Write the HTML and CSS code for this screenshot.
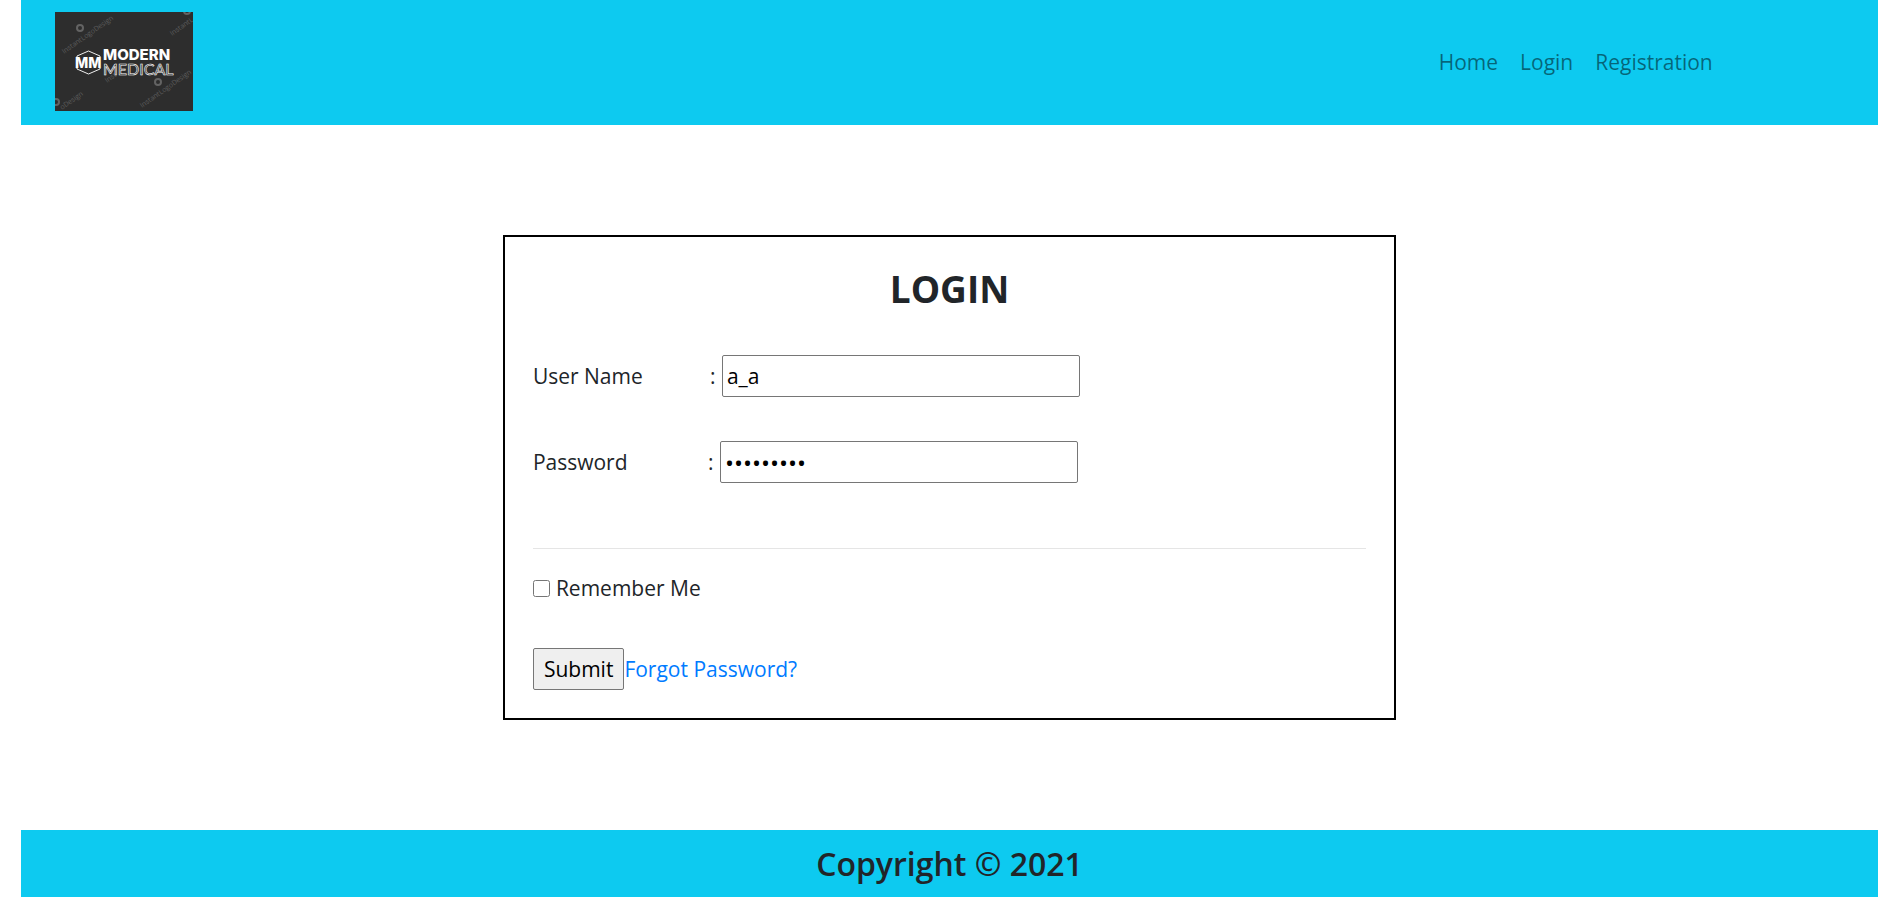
FILE: index.html
```html
<!DOCTYPE html>
<html lang="en">
<head>
<meta charset="utf-8">
<meta name="viewport" content="width=device-width, initial-scale=1">
<title>Login - Modern Medical</title>
<link rel="stylesheet" href="styles.css">
</head>
<body>
<div class="page">
  <header class="header">
    <a class="brand" href="#" aria-label="Modern Medical">
      <svg class="logo" viewBox="0 0 138 99" role="img" aria-hidden="true">
        <rect width="138" height="99" fill="#2d2d2d"/>
        <g class="mark">
          <text transform="translate(9 42) rotate(-35)">InstantLogoDesign</text>
          <text transform="translate(117 24) rotate(-35)">InstantL</text>
          <text transform="translate(52 71) rotate(-35)">Inst</text>
          <text transform="translate(87 96) rotate(-35)">InstantLogoDesign</text>
          <text transform="translate(7 98) rotate(-35)">oDesign</text>
        </g>
        <g fill="#2d2d2d" stroke="#636363" stroke-width="2">
          <circle cx="25" cy="16" r="3"/>
          <circle cx="103" cy="70" r="3"/>
          <circle cx="1" cy="90" r="3"/>
          <circle cx="132" cy="-1" r="3"/>
        </g>
        <path d="M22 45v-1l11.500-5L45 44v1M22 56v1l11.500 5L45 57v-1" fill="none" stroke="#eee" stroke-width="1"/>
        <text class="logo-mm" x="20" y="56">MM</text>
        <text class="logo-modern" x="48" y="48">MODERN</text>
        <text class="logo-medical" x="48" y="63">MEDICAL</text>
      </svg>
    </a>
    <nav class="nav">
      <a href="#">Home</a>
      <a href="#">Login</a>
      <a href="#">Registration</a>
    </nav>
  </header>
  <main class="main">
    <form class="card">
      <h1 class="title">LOGIN</h1>
      <div class="field">
        <label class="label" for="user">User Name</label>
        <span class="colon">:</span>
        <input class="input" id="user" type="text" value="a_a">
      </div>
      <div class="field field-password">
        <label class="label" for="password">Password</label>
        <span class="colon">:</span>
        <input class="input input-password" id="password" type="password" value="password1">
      </div>
      <hr class="rule">
      <div class="remember">
        <input class="check" id="remember" type="checkbox">
        <label for="remember">Remember Me</label>
      </div>
      <div class="actions">
        <button class="submit" type="button">Submit</button>
        <a class="forgot" href="#">Forgot Password?</a>
      </div>
    </form>
  </main>
  <footer class="footer">Copyright © 2021</footer>
</div>
</body>
</html>
```
FILE: styles.css
```css
* { box-sizing: border-box; }
body {
  margin: 0;
  background: #fff;
  color: #212529;
  font: 21px/32px "Open Sans", "Noto Sans", sans-serif;
}
.page {
  display: flex;
  flex-direction: column;
  min-height: 100vh;
  padding: 0 20px 0 21px;
}
.header {
  display: flex;
  align-items: center;
  justify-content: space-between;
  padding: 12px 8.9% 14px 34px;
  background: #0dcaf0;
}
.brand, .logo { display: block; }
.logo { width: 138px; height: 99px; }
.mark {
  fill: #5c5c5c;
  font: 7px "Open Sans", sans-serif;
}
.logo-mm { fill: #fff; font: 800 14px Inter, sans-serif; }
.logo-modern { fill: #fff; font: 800 15px Inter, sans-serif; }
.logo-medical { fill: #2d2d2d; stroke: #fff; stroke-width: 0.6px; font: 400 16px Lato, sans-serif; }
.nav { display: flex; gap: 22px; }
.nav a {
  color: rgba(0, 0, 0, 0.5);
  text-decoration: none;
}
.main {
  flex: 1;
  display: flex;
  align-items: center;
  justify-content: center;
}
.card {
  width: 48.1%;
  min-width: 620px;
  padding: 26px 28px 28px;
  border: 2px solid #000;
}
.title {
  margin: 0 0 40px;
  font-size: 37px;
  font-weight: 700;
  line-height: 52px;
  text-align: center;
}
.field { display: flex; align-items: center; }
.field-password { margin-top: 44px; }
.label { width: 177px; }
.field-password .label { width: 175px; }
.colon { width: 12px; }
.input {
  width: 358px;
  height: 42px;
  padding: 0 4px;
  border: 1px solid #767676;
  border-radius: 2px;
  background: #fff;
  color: #000;
  font: inherit;
}
.input-password { font-size: 24px; }
.rule {
  margin: 65px 0 23px;
  border: 0;
  border-top: 1px solid #e5e5e5;
}
.remember { display: flex; align-items: center; gap: 6px; }
.check { width: 17px; height: 17px; margin: 0; }
.actions { display: flex; align-items: center; margin-top: 44px; }
.submit {
  height: 42px;
  padding: 0 10px;
  border: 1px solid #767676;
  border-radius: 2px;
  background: #efefef;
  color: #000;
  font: inherit;
}
.forgot { color: #007bff; text-decoration: none; }
.footer {
  padding: 12px;
  background: #0dcaf0;
  font-size: 32px;
  font-weight: 600;
  line-height: 43px;
  text-align: center;
}
```
